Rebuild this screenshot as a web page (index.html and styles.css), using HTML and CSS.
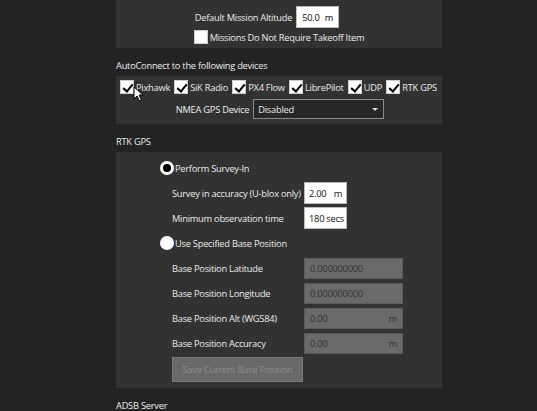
FILE: index.html
```html
<!DOCTYPE html>
<html lang="en">
<head>
    <meta charset="UTF-8">
    <meta name="viewport" content="width=device-width, initial-scale=1.0">
    <title>General Settings</title>
    <link rel="stylesheet" href="styles.css">
</head>
<body>
    <div class="page">
        <div class="panel panel-plan">
            <div class="plan-block">
                <div class="row">
                    <span class="label">Default Mission Altitude</span>
                    <div class="field field-alt"><span>50.0</span><span>m</span></div>
                </div>
                <div class="row check-row">
                    <span class="check"></span>
                    <span class="label">Missions Do Not Require Takeoff Item</span>
                </div>
            </div>
        </div>

        <div class="section-title">AutoConnect to the following devices</div>
        <div class="panel panel-auto">
            <div class="device-list">
                <div class="device"><span class="check checked"></span><span class="label">Pixhawk</span></div>
                <div class="device"><span class="check checked"></span><span class="label">SiK Radio</span></div>
                <div class="device"><span class="check checked"></span><span class="label">PX4 Flow</span></div>
                <div class="device"><span class="check checked"></span><span class="label">LibrePilot</span></div>
                <div class="device"><span class="check checked"></span><span class="label">UDP</span></div>
                <div class="device"><span class="check checked"></span><span class="label">RTK GPS</span></div>
            </div>
            <div class="row nmea-row">
                <span class="label">NMEA GPS Device</span>
                <div class="combo"><span>Disabled</span><span class="combo-arrow"></span></div>
            </div>
            <svg class="cursor" width="11" height="16" viewBox="0 0 11 16">
                <path d="M1 1 L1 13 L4 10 L6.5 15 L8.5 14 L6 9 L10 9 Z" fill="#fff" stroke="#000" stroke-width="1"/>
            </svg>
        </div>

        <div class="section-title">RTK GPS</div>
        <div class="panel panel-rtk">
            <div class="row radio-row">
                <span class="radio checked"></span>
                <span class="label">Perform Survey-In</span>
            </div>
            <div class="sub-rows">
                <div class="row form-row">
                    <span class="label form-label">Survey in accuracy (U-blox only)</span>
                    <div class="field field-small"><span>2.00</span><span>m</span></div>
                </div>
                <div class="row form-row">
                    <span class="label form-label">Minimum observation time</span>
                    <div class="field field-small"><span>180 secs</span></div>
                </div>
            </div>
            <div class="row radio-row radio-second">
                <span class="radio"></span>
                <span class="label">Use Specified Base Position</span>
            </div>
            <div class="sub-rows base-rows">
                <div class="row form-row">
                    <span class="label form-label">Base Position Latitude</span>
                    <div class="field field-off"><span>0.000000000</span></div>
                </div>
                <div class="row form-row">
                    <span class="label form-label">Base Position Longitude</span>
                    <div class="field field-off"><span>0.000000000</span></div>
                </div>
                <div class="row form-row">
                    <span class="label form-label">Base Position Alt (WGS84)</span>
                    <div class="field field-off"><span>0.00</span><span>m</span></div>
                </div>
                <div class="row form-row">
                    <span class="label form-label">Base Position Accuracy</span>
                    <div class="field field-off"><span>0.00</span><span>m</span></div>
                </div>
                <button class="save-btn" disabled>Save Current Base Position</button>
            </div>
        </div>

        <div class="section-title">ADSB Server</div>
    </div>
</body>
</html>
```

FILE: styles.css
```css
body {
    margin: 0;
    background-color: #232323;
    color: #ebebeb;
    font-family: "Open Sans", sans-serif;
    font-size: 9.3px;
    letter-spacing: -0.25px;
    height: 411px;
    overflow: hidden;
}
.page {
    width: 326px;
    margin-left: 116px;
}
.panel {
    background-color: #323232;
    position: relative;
}
.row {
    display: flex;
    align-items: center;
}
.label {
    white-space: nowrap;
}
.section-title {
    padding: 11px 0 3px;
    line-height: 14px;
}

/* plan */
.panel-plan {
    display: flex;
    justify-content: center;
    padding: 6px 0 4px 0;
}
.plan-block {
    display: flex;
    flex-direction: column;
    gap: 2px;
}
.plan-block .row:first-child .label {
    margin: 0 4px 0 1px;
}
.check-row {
    height: 14px;
}
.field {
    background-color: #fff;
    color: #111;
    border: 1px solid #bbb;
    box-sizing: border-box;
    height: 22px;
    display: flex;
    align-items: center;
    justify-content: space-between;
    padding: 0 5px;
    white-space: nowrap;
}
.field-alt {
    width: 43px;
}

/* checkboxes */
.check {
    width: 14px;
    height: 14px;
    background-color: #fff;
    box-sizing: border-box;
    border: 1px solid #ccc;
    margin-right: 2px;
    position: relative;
    flex: none;
}
.check.checked::after {
    content: "";
    position: absolute;
    left: 4px;
    top: 1px;
    width: 4px;
    height: 8px;
    border: solid #000;
    border-width: 0 2px 2px 0;
    transform: rotate(40deg);
}

/* autoconnect */
.panel-auto {
    padding: 4px 0 5px;
}
.device-list {
    display: flex;
    justify-content: space-between;
    padding: 0 5px 0 4px;
    height: 14px;
}
.device {
    display: flex;
    align-items: center;
}
.nmea-row {
    justify-content: center;
    margin-top: 5px;
    padding-left: 2px;
}
.nmea-row .label {
    margin-right: 4px;
}
.combo {
    width: 131px;
    height: 20px;
    box-sizing: border-box;
    border: 1px solid #8a8a8a;
    background-color: #272727;
    display: flex;
    align-items: center;
    justify-content: space-between;
    padding: 0 5px 0 4px;
}
.combo-arrow {
    width: 0;
    height: 0;
    border-left: 3px solid transparent;
    border-right: 3px solid transparent;
    border-top: 3px solid #ddd;
}
.cursor {
    position: absolute;
    left: 17px;
    top: 10px;
}

/* rtk */
.panel-rtk {
    padding: 9px 0 6px 44px;
}
.radio-row {
    height: 14px;
}
.radio {
    width: 14px;
    height: 14px;
    border-radius: 50%;
    background-color: #fff;
    margin-right: 1px;
    position: relative;
    flex: none;
}
.radio.checked::after {
    content: "";
    position: absolute;
    left: 3px;
    top: 3px;
    width: 8px;
    height: 8px;
    border-radius: 50%;
    background-color: #000;
}
.sub-rows {
    display: flex;
    flex-direction: column;
    gap: 3px;
    padding-left: 12px;
    margin-top: 7px;
}
.form-label {
    width: 132px;
}
.field-small {
    width: 43px;
    padding: 0 4px;
}
.radio-second {
    margin-top: 7px;
}
.base-rows {
    gap: 4px;
    margin-top: 8px;
}
.base-rows .form-row {
    height: 21px;
}
.field-off {
    width: 99px;
    height: 21px;
    background-color: #6a6a6a;
    border-color: #5a5a5a;
    color: #333;
}
.save-btn {
    width: 131px;
    height: 25px;
    margin-top: -1px;
    background-color: #696969;
    border: 1px solid #7b7b7b;
    color: #8c8c8c;
    font-family: "Open Sans", sans-serif;
    font-size: 9.3px;
    letter-spacing: -0.25px;
    padding: 0;
}
```
